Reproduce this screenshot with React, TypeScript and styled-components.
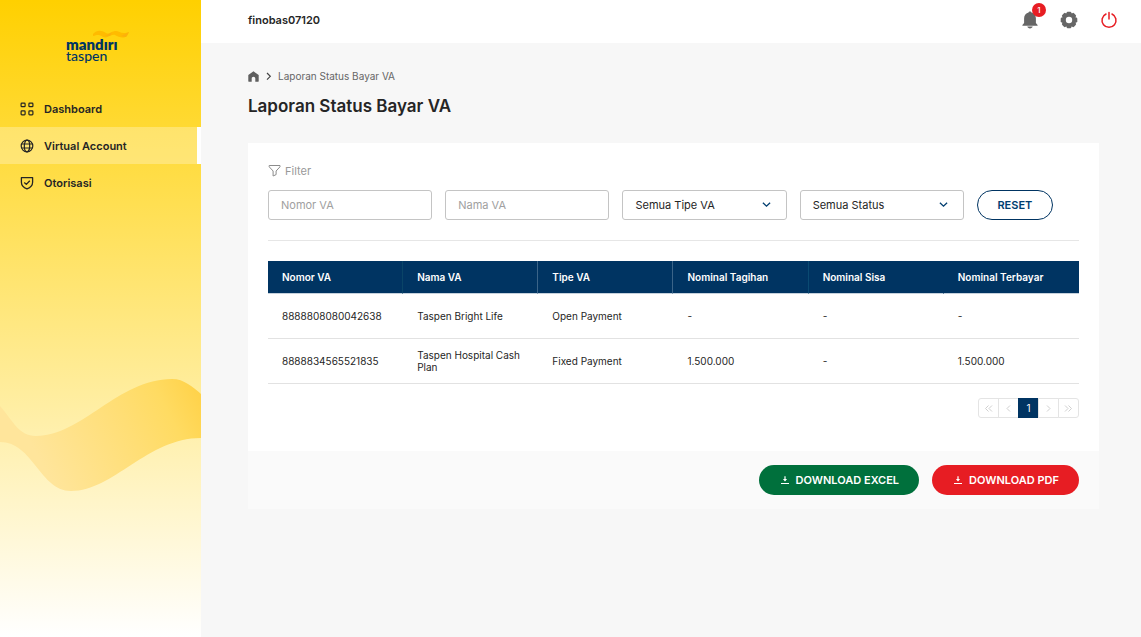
import React from "react";
import styled, { createGlobalStyle } from "styled-components";

const navy = "#003462";
const ink = "#252525";

const GlobalStyle = createGlobalStyle`
  *, *::before, *::after { box-sizing: border-box; }
  body {
    margin: 0;
    background: #f7f7f7;
    color: ${ink};
    font-family: Inter, "Liberation Sans", sans-serif;
    font-size: 11px;
  }
  button, input, select { font: inherit; color: inherit; }
  button { cursor: pointer; }
`;

const Shell = styled.div`
  display: flex;
  min-height: 100vh;
`;

const Sidebar = styled.aside`
  position: relative;
  flex: 0 0 201px;
  background: linear-gradient(180deg, #ffd000 0%, #fff 100%);
`;

const Wave = styled.svg`
  position: absolute;
  left: 0;
  top: 378px;
  width: 100%;
  height: 115px;
`;

const Brand = styled.a`
  display: block;
  height: 90px;
  padding: 30px 0 0 66px;
  color: ${navy};
  font-family: Lato, "Open Sans", sans-serif;
  text-decoration: none;
`;

const Ribbon = styled.svg`
  display: block;
  margin-left: 26px;
  width: 38px;
  height: 8px;
`;

const BrandName = styled.span<{ $bold?: boolean }>`
  display: block;
  font-size: ${(p) => (p.$bold ? 15 : 14)}px;
  font-weight: ${(p) => (p.$bold ? 800 : 500)};
  line-height: 12px;
`;

const Nav = styled.nav`
  position: relative;
  display: flex;
  flex-direction: column;
`;

const NavItem = styled.a<{ $active?: boolean }>`
  display: flex;
  align-items: center;
  gap: 10px;
  height: 37px;
  padding-left: 20px;
  border-right: 4px solid ${(p) => (p.$active ? "#fff" : "transparent")};
  background: ${(p) => (p.$active ? "rgba(255,255,255,0.28)" : "none")};
  background-clip: padding-box;
  color: ${ink};
  font-weight: 600;
  text-decoration: none;
`;

const Main = styled.div`
  flex: 1;
  min-width: 0;
`;

const TopBar = styled.header`
  display: flex;
  align-items: center;
  justify-content: space-between;
  height: 43px;
  padding: 0 23px 4px 47px;
  background: #fff;
  font-weight: 600;
`;

const Actions = styled.div`
  display: flex;
  align-items: center;
  gap: 22px;
`;

const IconButton = styled.button`
  position: relative;
  display: flex;
  padding: 0;
  border: 0;
  background: none;
`;

const Badge = styled.span`
  position: absolute;
  top: -8px;
  right: -8px;
  width: 14px;
  height: 14px;
  border-radius: 50%;
  background: #e71d23;
  color: #fff;
  font-size: 8px;
  font-weight: 500;
  line-height: 14px;
  text-align: center;
`;

const Content = styled.main`
  padding: 25px 42px 25px 47px;
`;

const Breadcrumb = styled.nav`
  display: flex;
  align-items: center;
  gap: 5px;
  height: 16px;
  color: #666;
  font-size: 10px;

  a { display: flex; color: #5f5f5f; }
`;

const Title = styled.h1`
  margin: 11px 0 26px;
  font-size: 17px;
  font-weight: 600;
  line-height: 22px;
`;

const Card = styled.section`
  background: #fff;
`;

const CardBody = styled.div`
  padding: 20px 20px 33px;
`;

const FilterLabel = styled.div`
  display: flex;
  align-items: center;
  gap: 4px;
  height: 15px;
  margin-bottom: 12px;
  color: #999;
  font-size: 11px;
`;

const Filters = styled.form`
  display: grid;
  grid-template-columns: repeat(4, minmax(0, 164fr)) minmax(76px, 102fr);
  gap: 13px;
  padding-bottom: 20px;
  margin-bottom: 20px;
  border-bottom: 1px solid #e6e6e6;
`;

const Input = styled.input`
  width: 100%;
  height: 30px;
  padding: 0 12px;
  border: 1px solid #c4c4c4;
  border-radius: 3px;
  background: #fff;

  &::placeholder { color: #a0a0a0; opacity: 1; }
`;

const SelectBox = styled.div`
  position: relative;

  svg {
    position: absolute;
    right: 16px;
    top: 10px;
    pointer-events: none;
  }
`;

const Select = styled.select`
  width: 100%;
  height: 30px;
  padding: 0 12px;
  border: 1px solid #c4c4c4;
  border-radius: 3px;
  background: #fff;
  appearance: none;
`;

const ResetButton = styled.button`
  justify-self: start;
  width: 76px;
  height: 30px;
  padding: 0;
  border: 1px solid ${navy};
  border-radius: 15px;
  background: #fff;
  color: #003e70;
  font-weight: 600;
`;

const Table = styled.table`
  width: 100%;
  border-collapse: separate;
  border-spacing: 0;
  table-layout: fixed;
  font-size: 10px;
  line-height: 12px;
`;

const HeadCell = styled.th<{ $line: string }>`
  height: 33px;
  padding: 0 12px 0 14px;
  border-right: 1px solid ${(p) => p.$line};
  border-bottom: 1px solid #c5d1dc;
  background: ${navy};
  background-clip: padding-box;
  color: #fff;
  font-weight: 600;
  text-align: left;

  &:last-child { border-right: 0; }
`;

const Cell = styled.td`
  height: 45px;
  padding: 0 12px 0 14px;
  border-bottom: 1px solid #e2e2e2;
`;

const Pager = styled.nav`
  display: flex;
  justify-content: flex-end;
  margin-top: 14px;
`;

const PageButton = styled.button<{ $current?: boolean }>`
  display: flex;
  align-items: center;
  justify-content: center;
  width: 21px;
  height: 20px;
  margin-left: -1px;
  padding: 0;
  border: 1px solid ${(p) => (p.$current ? navy : "#e4e4e4")};
  background: ${(p) => (p.$current ? navy : "#fff")};
  color: ${(p) => (p.$current ? "#fff" : "#d0d0d0")};
  font-size: 10px;

  &:first-child { border-radius: 3px 0 0 3px; }
  &:last-child { border-radius: 0 3px 3px 0; }
`;

const CardFooter = styled.footer`
  display: flex;
  justify-content: flex-end;
  gap: 13px;
  padding: 14px 20px;
  background: #fafafa;
`;

const DownloadButton = styled.button<{ $color: string }>`
  display: flex;
  align-items: center;
  gap: 6px;
  height: 30px;
  padding: 0 20px 0 21px;
  border: 0;
  border-radius: 15px;
  background: ${(p) => p.$color};
  color: #fff;
  font-weight: 600;
`;

const GridIcon = () => (
  <svg width="14" height="14" viewBox="0 0 14 14" fill="none" stroke={ink} strokeWidth="1.2">
    <rect x="1.1" y="1.1" width="4" height="3.6" rx="0.8" />
    <rect x="8.9" y="1.1" width="4" height="3.6" rx="0.8" />
    <rect x="1.1" y="8.9" width="4" height="4" rx="0.8" />
    <rect x="8.9" y="8.9" width="4" height="4" rx="0.8" />
  </svg>
);

const GlobeIcon = () => (
  <svg width="14" height="14" viewBox="0 0 14 14" fill="none" stroke={ink} strokeWidth="1.2">
    <circle cx="7" cy="7" r="5.8" />
    <ellipse cx="7" cy="7" rx="2.7" ry="5.8" />
    <path d="M1.6 5h10.8M1.6 9h10.8" />
  </svg>
);

const ShieldIcon = () => (
  <svg width="14" height="14" viewBox="0 0 14 14" fill="none" stroke={ink} strokeWidth="1.3" strokeLinejoin="round">
    <path d="M1.4 1.6h11.2v4.6c0 3.2-2.2 5.3-5.6 6.6-3.4-1.3-5.6-3.4-5.6-6.6z" />
    <path d="M4.3 6.5l2 1.9 3.5-3.7" />
  </svg>
);

const BellIcon = () => (
  <svg width="16" height="18" viewBox="0 0 16 18" fill="#666">
    <path d="M8 .6c-.8 0-1.3.4-1.4 1C4 2.200 2.100 4.400 2.100 7.200v4.900L.4 13.900v.8h15.200v-.8l-1.700-1.800V7.200c0-2.800-1.900-5-4.500-5.600C9.300 1 8.800.6 8 .6z" />
    <path d="M5.300 15.600h5.400c-.2 1.100-1.300 1.800-2.700 1.800s-2.500-.7-2.700-1.800z" />
  </svg>
);

const GearIcon = () => (
  <svg width="18" height="18" viewBox="0 0 18 18">
    <g fill="#666">
      {[0, 45, 90, 135].map((a) => (
        <rect key={a} x="6.6" y="0.7" width="4.8" height="16.6" rx="1.2" transform={`rotate(${a} 9 9)`} />
      ))}
      <circle cx="9" cy="9" r="7.2" />
    </g>
    <circle cx="9" cy="9" r="3.2" fill="#fff" />
  </svg>
);

const PowerIcon = () => (
  <svg width="18" height="18" viewBox="0 0 18 18" fill="none" stroke="#e71d23" strokeWidth="1.5" strokeLinecap="round">
    <path d="M9 1.500v6.500M6 3a7 7 0 1 0 6 0" />
  </svg>
);

const HomeIcon = () => (
  <svg width="11" height="11" viewBox="0 0 11 11" fill="currentColor">
    <path d="M5.500.3L.3 4.100v6.100c0 .3.200.5.500.5h2.900V7.600c0-1 .8-1.800 1.800-1.800s1.800.8 1.800 1.800v3.100h2.900c.3 0 .5-.2.500-.5V4.100z" />
  </svg>
);

const CrumbChevron = () => (
  <svg width="9" height="9" viewBox="0 0 9 9" fill="none" stroke="#444" strokeWidth="1.2">
    <path d="M3 1l3.300 3.300L3 7.600" />
  </svg>
);

const FunnelIcon = () => (
  <svg width="13" height="13" viewBox="0 0 13 13" fill="none" stroke="#8c8c8c" strokeWidth="1" strokeLinejoin="round">
    <path d="M1.200 1.500h10.800v1.300L8.100 7v3.600L5.100 12V7L1.200 2.800z" />
  </svg>
);

const DownChevron = () => (
  <svg width="9" height="9" viewBox="0 0 9 9" fill="none" stroke="#003e70" strokeWidth="1.3">
    <path d="M.9 2.700l3.600 3.500 3.600-3.500" />
  </svg>
);

const DownloadIcon = () => (
  <svg width="10" height="10" viewBox="0 0 10 10" fill="none" stroke="#fff" strokeWidth="1.2">
    <path d="M1 8.500h8M5 1.300v4" />
    <path d="M2.900 4.100h4.200L5 6.600z" fill="#fff" stroke="none" />
  </svg>
);

const PageArrow = ({ d }: { d: string }) => (
  <svg width="9" height="9" viewBox="0 0 9 9" fill="none" stroke="currentColor" strokeWidth="1">
    <path d={d} />
  </svg>
);

const columns = ["Nomor VA", "Nama VA", "Tipe VA", "Nominal Tagihan", "Nominal Sisa", "Nominal Terbayar"];
const dividers = ["#0a4467", "#3b6488", "#3b6488", "#0a4a72", navy, navy];
const rows = [
  ["8888808080042638", "Taspen Bright Life", "Open Payment", "-", "-", "-"],
  ["8888834565521835", "Taspen Hospital Cash Plan", "Fixed Payment", "1.500.000", "-", "1.500.000"],
];

export default function App() {
  return (
    <>
      <GlobalStyle />
      <Shell>
        <Sidebar>
          <Wave viewBox="0 378 201 115" preserveAspectRatio="none" aria-hidden="true">
            <defs>
              <linearGradient id="wave" gradientUnits="userSpaceOnUse" x1="50" y1="480" x2="200" y2="400">
                <stop offset="0" stopColor="#ffe59b" />
                <stop offset="0.55" stopColor="#ffde75" />
                <stop offset="0.8" stopColor="#ffdb62" />
                <stop offset="1" stopColor="#ffd34c" />
              </linearGradient>
            </defs>
            <path
              d="M0 406C13 421 19 436 36 436C82 436 118 379 172 379C184 379 193 387 201 394V438C147 438 114 491 71 491C40 491 33 442 0 442Z"
              fill="url(#wave)"
            />
          </Wave>
          <Brand href="#" aria-label="mandiri taspen">
            <Ribbon viewBox="0 0 38 8" aria-hidden="true">
              <path d="M1 4C5 0 9 0 14 3C18 5 19 1 24 1C27 1 30 5 37 2L35 6C31 9 27 7 23 5C18 4 16 9 11 7C7 4 5 5 1 6Z" fill="#ffbb00" />
              <path d="M13 6L20 2L18 6ZM29 6L37 2L34 7Z" fill="#fcb00c" />
            </Ribbon>
            <BrandName $bold>mandırı</BrandName>
            <BrandName>taspen</BrandName>
          </Brand>
          <Nav>
            <NavItem href="#"><GridIcon />Dashboard</NavItem>
            <NavItem href="#" $active><GlobeIcon />Virtual Account</NavItem>
            <NavItem href="#"><ShieldIcon />Otorisasi</NavItem>
          </Nav>
        </Sidebar>
        <Main>
          <TopBar>
            <span>finobas07120</span>
            <Actions>
              <IconButton aria-label="Notifikasi"><BellIcon /><Badge>1</Badge></IconButton>
              <IconButton aria-label="Pengaturan"><GearIcon /></IconButton>
              <IconButton aria-label="Keluar"><PowerIcon /></IconButton>
            </Actions>
          </TopBar>
          <Content>
            <Breadcrumb>
              <a href="#" aria-label="Beranda"><HomeIcon /></a>
              <CrumbChevron />
              <span>Laporan Status Bayar VA</span>
            </Breadcrumb>
            <Title>Laporan Status Bayar VA</Title>
            <Card>
              <CardBody>
                <FilterLabel><FunnelIcon />Filter</FilterLabel>
                <Filters>
                  <Input placeholder="Nomor VA" aria-label="Nomor VA" />
                  <Input placeholder="Nama VA" aria-label="Nama VA" />
                  <SelectBox>
                    <Select aria-label="Tipe VA"><option>Semua Tipe VA</option></Select>
                    <DownChevron />
                  </SelectBox>
                  <SelectBox>
                    <Select aria-label="Status"><option>Semua Status</option></Select>
                    <DownChevron />
                  </SelectBox>
                  <ResetButton type="reset">RESET</ResetButton>
                </Filters>
                <Table>
                  <thead>
                    <tr>
                      {columns.map((c, i) => <HeadCell key={c} $line={dividers[i]}>{c}</HeadCell>)}
                    </tr>
                  </thead>
                  <tbody>
                    {rows.map((r) => (
                      <tr key={r[0]}>
                        {r.map((v, i) => <Cell key={i}>{v}</Cell>)}
                      </tr>
                    ))}
                  </tbody>
                </Table>
                <Pager aria-label="Halaman">
                  <PageButton aria-label="Pertama"><PageArrow d="M4.500 1.500l-3 3 3 3M8 1.500l-3 3 3 3" /></PageButton>
                  <PageButton aria-label="Sebelumnya"><PageArrow d="M6 1.500l-3 3 3 3" /></PageButton>
                  <PageButton $current>1</PageButton>
                  <PageButton aria-label="Berikutnya"><PageArrow d="M3 1.500l3 3-3 3" /></PageButton>
                  <PageButton aria-label="Terakhir"><PageArrow d="M1 1.500l3 3-3 3M4.500 1.500l3 3-3 3" /></PageButton>
                </Pager>
              </CardBody>
              <CardFooter>
                <DownloadButton $color="#00703c"><DownloadIcon />DOWNLOAD EXCEL</DownloadButton>
                <DownloadButton $color="#e71d23"><DownloadIcon />DOWNLOAD PDF</DownloadButton>
              </CardFooter>
            </Card>
          </Content>
        </Main>
      </Shell>
    </>
  );
}
